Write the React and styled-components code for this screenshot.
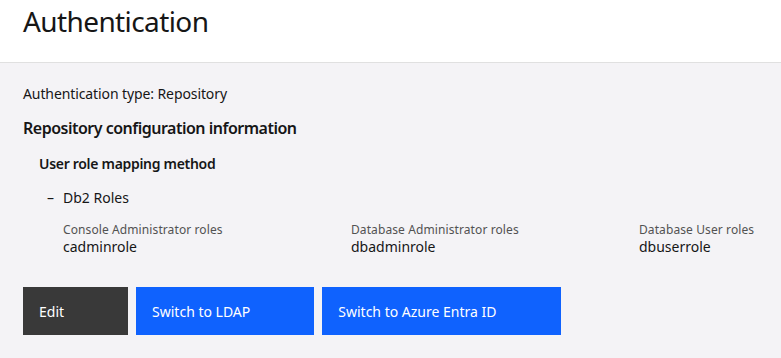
import React from "react";
import styled, { createGlobalStyle } from "styled-components";

const GlobalStyle = createGlobalStyle`
  html, body {
    margin: 0;
    padding: 0;
    background: #f4f3f6;
  }
  body {
    font-family: "Noto Sans", "Liberation Sans", sans-serif;
    color: #161616;
  }
`;

const roles = [
  { label: "Console Administrator roles", value: "cadminrole" },
  { label: "Database Administrator roles", value: "dbadminrole" },
  { label: "Database User roles", value: "dbuserrole" },
];

const App = () => {
  return (
    <Page>
      <GlobalStyle />
      <Header>
        <Title>Authentication</Title>
      </Header>
      <Body>
        <TypeLine>Authentication type: Repository</TypeLine>
        <SectionTitle>Repository configuration information</SectionTitle>
        <SubTitle>User role mapping method</SubTitle>
        <MethodItem>
          <Dash>–</Dash>
          Db2 Roles
        </MethodItem>
        <RoleGrid>
          {roles.map((r) => (
            <Role key={r.label}>
              <RoleLabel>{r.label}</RoleLabel>
              <RoleValue>{r.value}</RoleValue>
            </Role>
          ))}
        </RoleGrid>
        <Actions>
          <Button $kind="secondary">Edit</Button>
          <Button>Switch to LDAP</Button>
          <Button>Switch to Azure Entra ID</Button>
        </Actions>
      </Body>
    </Page>
  );
};

export default App;

const Page = styled.div`
  width: 781px;
  min-height: 358px;
  overflow: hidden;
`;

const Header = styled.header`
  height: 59px;
  background: #ffffff;
  border-bottom: 1px solid #e0e0e0;
  padding: 3px 23px 0;
`;

const Title = styled.h1`
  margin: 0;
  font-size: 28px;
  line-height: 36px;
  font-weight: 400;
  letter-spacing: -0.6px;
  color: #161616;
`;

const Body = styled.main`
  padding: 22px 23px 0;
`;

const TypeLine = styled.p`
  margin: 0;
  font-size: 14px;
  line-height: 18px;
  letter-spacing: -0.1px;
  color: #161616;
`;

const SectionTitle = styled.h2`
  margin: 14px 0 0;
  font-size: 16px;
  line-height: 22px;
  font-weight: 600;
  letter-spacing: -0.5px;
`;

const SubTitle = styled.h3`
  margin: 16px 0 0 16px;
  font-size: 14px;
  line-height: 18px;
  font-weight: 600;
  letter-spacing: -0.3px;
`;

const MethodItem = styled.div`
  margin: 16px 0 0 24px;
  font-size: 14px;
  line-height: 18px;
  display: flex;
`;

const Dash = styled.span`
  width: 16px;
`;

const RoleGrid = styled.div`
  margin: 15px 0 0 40px;
  display: grid;
  grid-template-columns: 288px 288px 288px;
`;

const Role = styled.div`
  display: flex;
  flex-direction: column;
`;

const RoleLabel = styled.span`
  font-size: 12px;
  line-height: 16px;
  color: #525252;
  letter-spacing: 0.1px;
`;

const RoleValue = styled.span`
  font-size: 14px;
  line-height: 18px;
  color: #161616;
`;

const Actions = styled.div`
  margin-top: 31px;
  display: flex;
  gap: 8px;
`;

const Button = styled.button`
  height: 48px;
  padding: 0 64px 0 16px;
  border: none;
  border-radius: 0;
  font-family: inherit;
  font-size: 14px;
  text-align: left;
  color: #ffffff;
  background: ${(p) => (p.$kind === "secondary" ? "#393939" : "#0f62fe")};
  cursor: pointer;
`;
